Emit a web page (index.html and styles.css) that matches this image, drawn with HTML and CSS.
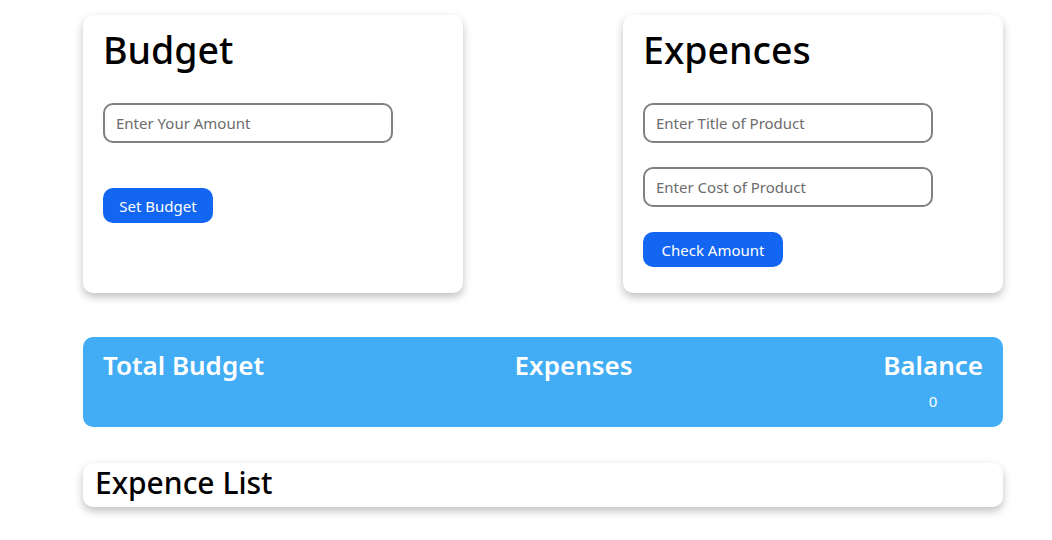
FILE: index.html
```html
<!DOCTYPE html>
<html>
<head>
<meta charset="utf-8">
<link rel="stylesheet" href="styles.css">
</head>
<body>
<div class="page">
  <div class="top-row">
    <div class="card form-card">
      <h1 class="card-title">Budget</h1>
      <input class="field" type="text" placeholder="Enter Your Amount">
      <button class="btn btn-budget">Set Budget</button>
    </div>
    <div class="card form-card">
      <h1 class="card-title">Expences</h1>
      <input class="field" type="text" placeholder="Enter Title of Product">
      <input class="field field-gap" type="text" placeholder="Enter Cost of Product">
      <button class="btn btn-check">Check Amount</button>
    </div>
  </div>
  <div class="summary">
    <div class="sum-col">
      <div class="sum-label">Total Budget</div>
      <div class="sum-value"></div>
    </div>
    <div class="sum-col">
      <div class="sum-label">Expenses</div>
      <div class="sum-value"></div>
    </div>
    <div class="sum-col">
      <div class="sum-label">Balance</div>
      <div class="sum-value">0</div>
    </div>
  </div>
  <div class="card list-card">
    <h2 class="list-title">Expence List</h2>
  </div>
</div>
</body>
</html>
```

FILE: styles.css
```css
* { box-sizing: border-box; }
body {
  margin: 0;
  font-family: "Noto Sans", "Open Sans", sans-serif;
  background: #fff;
  color: #000;
}
.page {
  width: 920px;
  margin-left: 83px;
  padding-top: 15px;
  padding-bottom: 30px;
}
.top-row {
  display: flex;
  justify-content: space-between;
}
.card {
  background: #fff;
  border-radius: 10px;
  box-shadow: 0 4px 8px rgba(0,0,0,0.25);
}
.form-card {
  width: 380px;
  height: 278px;
  padding: 12px 20px 0 20px;
  display: flex;
  flex-direction: column;
  align-items: flex-start;
}
.card-title {
  margin: 0 0 30px 0;
  font-size: 37.5px;
  font-weight: 500;
  line-height: 46px;
}
.field {
  width: 290px;
  height: 40px;
  border: 2px solid #808080;
  border-radius: 10px;
  padding: 0 11px;
  font-family: inherit;
  font-size: 15px;
  color: #333;
  outline: none;
}
.field::placeholder { color: #6c6c6c; }
.field-gap { margin-top: 24px; }
.btn {
  height: 35px;
  border: none;
  border-radius: 10px;
  background: #1266f1;
  color: #fff;
  font-family: inherit;
  font-size: 15px;
  padding: 0;
}
.btn-budget { margin-top: 45px; width: 110px; }
.btn-check { margin-top: 25px; width: 140px; }
.summary {
  margin-top: 44px;
  height: 90px;
  background: #42adf5;
  border-radius: 10px;
  padding: 10px 20px;
  display: flex;
  justify-content: space-between;
  color: #fff;
}
.sum-col { text-align: center; }
.sum-label {
  font-size: 26px;
  font-weight: 600;
  line-height: 36px;
}
.sum-value {
  font-size: 15px;
  line-height: 20px;
  margin-top: 8px;
}
.list-card {
  margin-top: 36px;
  height: 44px;
  padding: 0 12px;
}
.list-title {
  margin: 0;
  font-size: 30px;
  font-weight: 500;
  line-height: 40px;
}
```
